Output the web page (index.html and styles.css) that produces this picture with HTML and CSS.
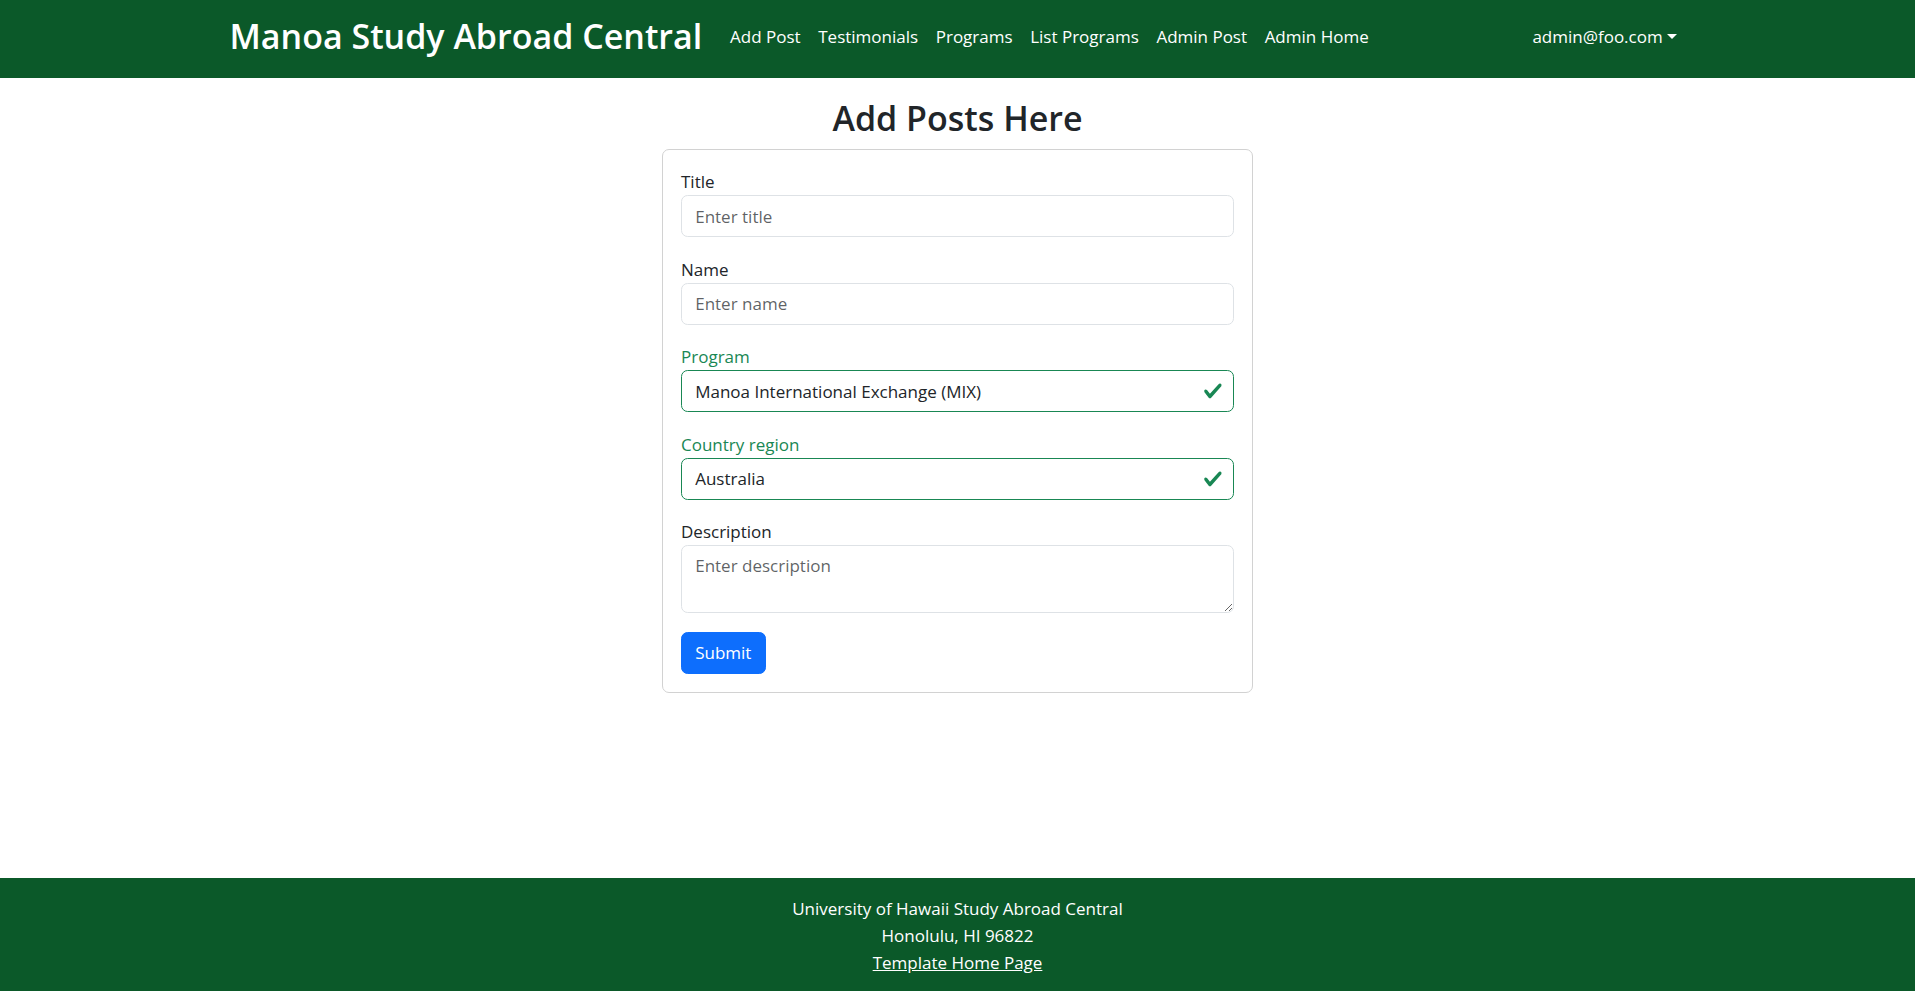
FILE: index.html
```html
<!DOCTYPE html>
<html lang="en">
<head>
<meta charset="utf-8">
<title>Manoa Study Abroad Central</title>
<link rel="stylesheet" href="styles.css">
</head>
<body>
<nav class="navbar">
  <div class="nav-inner">
    <a class="brand" href="#">Manoa Study Abroad Central</a>
    <ul class="nav-links">
      <li><a class="nav-link" href="#">Add Post</a></li>
      <li><a class="nav-link" href="#">Testimonials</a></li>
      <li><a class="nav-link" href="#">Programs</a></li>
      <li><a class="nav-link" href="#">List Programs</a></li>
      <li><a class="nav-link" href="#">Admin Post</a></li>
      <li><a class="nav-link" href="#">Admin Home</a></li>
    </ul>
    <div class="nav-right">
      <a class="nav-link dropdown-toggle" href="#">admin@foo.com</a>
    </div>
  </div>
</nav>

<main class="main">
  <h2 class="page-title">Add Posts Here</h2>
  <form class="card">
    <div class="field">
      <label class="label" for="title">Title</label>
      <input class="control" id="title" type="text" placeholder="Enter title">
    </div>
    <div class="field">
      <label class="label" for="name">Name</label>
      <input class="control" id="name" type="text" placeholder="Enter name">
    </div>
    <div class="field">
      <label class="label valid" for="program">Program</label>
      <div class="control-wrap">
        <input class="control is-valid" id="program" type="text" value="Manoa International Exchange (MIX)">
        <svg class="check" viewBox="0 0 8 8" aria-hidden="true"><path fill="#198754" d="M2.3 6.73.6 4.53c-.4-1.04.46-1.4 1.1-.8l1.1 1.4 3.4-3.8c.6-.63 1.6-.27 1.2.7l-4 4.6c-.43.5-.8.4-1.1.1z"/></svg>
      </div>
    </div>
    <div class="field">
      <label class="label valid" for="country">Country region</label>
      <div class="control-wrap">
        <input class="control is-valid" id="country" type="text" value="Australia">
        <svg class="check" viewBox="0 0 8 8" aria-hidden="true"><path fill="#198754" d="M2.3 6.73.6 4.53c-.4-1.04.46-1.4 1.1-.8l1.1 1.4 3.4-3.8c.6-.63 1.6-.27 1.2.7l-4 4.6c-.43.5-.8.4-1.1.1z"/></svg>
      </div>
    </div>
    <div class="field">
      <label class="label" for="description">Description</label>
      <textarea class="control textarea" id="description" rows="2" placeholder="Enter description"></textarea>
    </div>
    <button class="btn-submit" type="button">Submit</button>
  </form>
</main>

<footer class="footer">
  <div>University of Hawaii Study Abroad Central</div>
  <div>Honolulu, HI 96822</div>
  <div><a class="footer-link" href="#">Template Home Page</a></div>
</footer>
</body>
</html>
```

FILE: styles.css
```css
* { box-sizing: border-box; }

body {
  margin: 0;
  font-family: "Open Sans", "Noto Sans", sans-serif;
  font-size: 17px;
  line-height: 26.4px;
  color: #212529;
  background: #fff;
  display: flex;
  flex-direction: column;
  min-height: 100vh;
}

.navbar {
  background: #0b5929;
  height: 78px;
  flex: none;
}

.nav-inner {
  width: 1456px;
  height: 100%;
  margin: 0 auto;
  display: flex;
  align-items: center;
  padding-bottom: 4px;
}

.brand {
  color: #fff;
  text-decoration: none;
  font-size: 34px;
  font-weight: 600;
  line-height: 42px;
  margin-right: 19px;
  margin-top: -2px;
}

.nav-links {
  list-style: none;
  margin: 0;
  padding: 0;
  display: flex;
}

.nav-link {
  color: #fff;
  text-decoration: none;
  padding: 0 8.8px;
  display: inline-block;
}

.nav-right {
  margin-left: auto;
}

.dropdown-toggle::after {
  content: "";
  display: inline-block;
  margin-left: 4px;
  vertical-align: 4px;
  border-top: 5px solid #fff;
  border-left: 5px solid transparent;
  border-right: 5px solid transparent;
}

.main {
  flex: 1;
  display: flex;
  flex-direction: column;
  align-items: center;
  padding-top: 19px;
}

.page-title {
  margin: 0 0 10px;
  font-size: 34px;
  font-weight: 600;
  line-height: 42px;
}

.card {
  width: 591px;
  border: 1px solid #d2d2d2;
  border-radius: 7px;
  padding: 18px;
}

.field {
  margin-bottom: 18.5px;
}

.label {
  display: block;
  line-height: 27px;
}

.label.valid {
  color: #198754;
}

.control-wrap {
  position: relative;
}

.control {
  display: block;
  width: 100%;
  height: 42px;
  padding: 6.8px 13.2px;
  font-family: inherit;
  font-size: 17px;
  line-height: 26.4px;
  color: #212529;
  background: #fff;
  border: 1px solid #dee2e6;
  border-radius: 6.6px;
  outline: none;
}

.control::placeholder {
  color: rgba(33, 37, 41, 0.72);
}

.control.is-valid {
  border-color: #198754;
  padding-right: 44px;
}

.check {
  position: absolute;
  right: 11px;
  top: 50%;
  width: 19.8px;
  height: 19.8px;
  transform: translateY(-50%);
}

.textarea {
  height: 68px;
  resize: vertical;
}

.btn-submit {
  display: block;
  height: 42px;
  padding: 0 13.2px;
  font-family: inherit;
  font-size: 17px;
  color: #fff;
  background: #0d6efd;
  border: 1px solid #0d6efd;
  border-radius: 6.6px;
  cursor: pointer;
}

.footer {
  flex: none;
  background: #0b5929;
  color: #fff;
  text-align: center;
  padding: 17px 0;
  height: 113px;
  line-height: 27px;
}

.footer-link {
  color: #fff;
  text-decoration: underline;
}
```
